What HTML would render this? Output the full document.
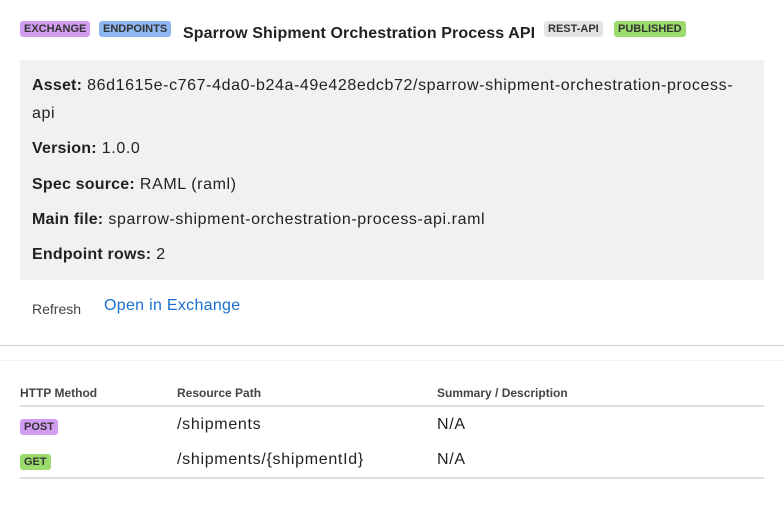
<!DOCTYPE html>
<html><head><style>
body{margin:0;width:784px;height:524px;background:#fff;font-family:"Liberation Sans",sans-serif;color:#222;position:relative;overflow:hidden}
.a{position:absolute;white-space:nowrap}
.b{position:absolute;font-size:11px;font-weight:bold;padding:0 4px;height:16px;line-height:16px;border-radius:3px;color:#333}
.box{position:absolute;left:20px;top:60px;width:744px;height:220px;background:#f0f1f2}
.r{font-size:16px;color:#222;letter-spacing:0.6px}
.r b{font-weight:bold;letter-spacing:0.2px}
.t{font-size:16px;letter-spacing:0.7px}
</style></head><body>
<div class="b" style="left:20px;top:21px;background:#d29cf0">EXCHANGE</div>
<div class="b" style="left:99px;top:21px;background:#8fb7f0">ENDPOINTS</div>
<div class="a" style="left:183px;top:25px;font-size:16px;font-weight:bold;letter-spacing:0.1px">Sparrow Shipment Orchestration Process API</div>
<div class="b" style="left:544px;top:21px;background:#e3e3e3">REST-API</div>
<div class="b" style="left:614px;top:21px;background:#9bdb6c">PUBLISHED</div>
<div class="box"></div>
<div class="a r" style="left:32px;top:77px"><b>Asset:</b> 86d1615e-c767-4da0-b24a-49e428edcb72/sparrow-shipment-orchestration-process-</div>
<div class="a r" style="left:32px;top:105px">api</div>
<div class="a r" style="left:32px;top:140px"><b>Version:</b> 1.0.0</div>
<div class="a r" style="left:32px;top:176px"><b>Spec source:</b> RAML (raml)</div>
<div class="a r" style="left:32px;top:211px"><b>Main file:</b> sparrow-shipment-orchestration-process-api.raml</div>
<div class="a r" style="left:32px;top:246px"><b>Endpoint rows:</b> 2</div>
<div class="a" style="left:32px;top:301px;font-size:14px;color:#444">Refresh</div>
<div class="a" style="left:104px;top:297px;font-size:16px;color:#1a6fd0;letter-spacing:0.3px">Open in Exchange</div>
<div class="a" style="left:0;top:345px;width:784px;height:1px;background:#ccc"></div>
<div class="a" style="left:0;top:360px;width:784px;height:1px;background:#f0f0f0"></div>
<div class="a" style="left:20px;top:386px;font-size:12px;font-weight:bold;color:#444">HTTP Method</div>
<div class="a" style="left:177px;top:386px;font-size:12px;font-weight:bold;color:#444">Resource Path</div>
<div class="a" style="left:437px;top:386px;font-size:12px;font-weight:bold;color:#444">Summary / Description</div>
<div class="a" style="left:20px;top:405px;width:744px;height:2px;background:#ddd"></div>
<div class="b" style="left:20px;top:419px;background:#d29cf0">POST</div>
<div class="a t" style="left:177px;top:416px">/shipments</div>
<div class="a t" style="left:437px;top:416px">N/A</div>
<div class="b" style="left:20px;top:454px;background:#9bdb6c">GET</div>
<div class="a t" style="left:177px;top:451px">/shipments/{shipmentId}</div>
<div class="a t" style="left:437px;top:451px">N/A</div>
<div class="a" style="left:20px;top:477px;width:744px;height:2px;background:#ddd"></div>
</body></html>
